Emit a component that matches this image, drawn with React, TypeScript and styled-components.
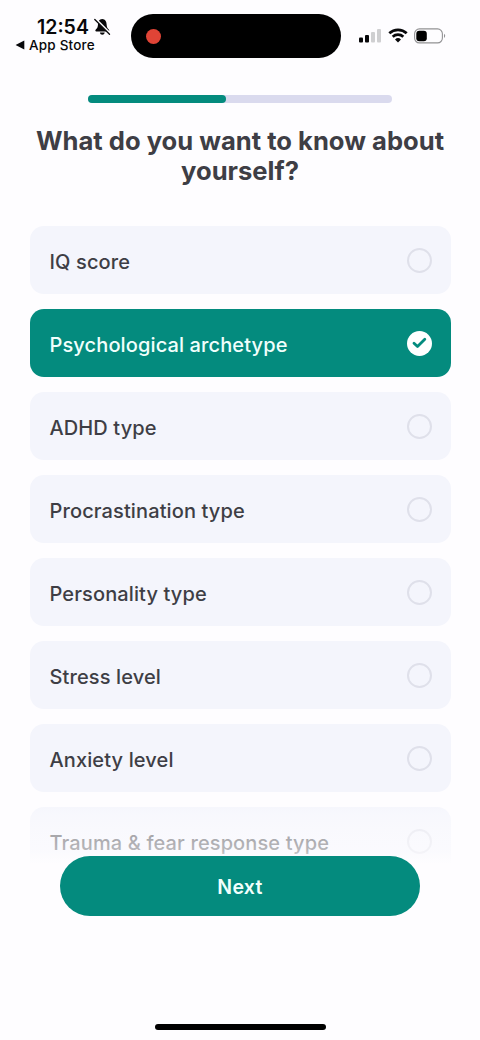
import React from "react";
import styled, { createGlobalStyle } from "styled-components";

const GlobalStyle = createGlobalStyle`
  * { box-sizing: border-box; }
  body { margin: 0; background: #fefdff; }
`;

const Screen = styled.main`
  width: 480px;
  height: 1040px;
  display: flex;
  flex-direction: column;
  align-items: center;
  overflow: hidden;
  background: #fefdff;
  color: #3e3e45;
  font-family: Inter, "Liberation Sans", sans-serif;
`;

const StatusBar = styled.header`
  width: 100%;
  height: 95px;
  flex: none;
  display: grid;
  grid-template-columns: 131px 210px 139px;
  align-items: start;
  padding-top: 14px;
  color: #08080a;
`;

const ClockArea = styled.div`
  display: flex;
  flex-direction: column;
  padding: 2px 0 0 15px;
`;

const ClockRow = styled.div`
  display: flex;
  align-items: center;
  gap: 4px;
  height: 21px;
  padding-left: 22px;
`;

const Clock = styled.span`
  width: 53px;
  padding-top: 2px;
  font-size: 19.5px;
  font-weight: 600;
  line-height: 21px;
  white-space: nowrap;
`;

const BackLink = styled.div`
  display: flex;
  align-items: center;
  gap: 4px;
  height: 16px;
  font-size: 13.5px;
  font-weight: 500;
  line-height: 16px;
  letter-spacing: 0.2px;
  white-space: nowrap;
`;

const Island = styled.div`
  height: 44px;
  display: flex;
  align-items: center;
  padding-left: 15px;
  border-radius: 22px;
  background: #000;
`;

const RecordDot = styled.span`
  width: 15px;
  height: 15px;
  border-radius: 50%;
  background: #e04436;
`;

const Indicators = styled.div`
  display: flex;
  align-items: center;
  gap: 6px;
  height: 43px;
  padding-left: 18px;
`;

const ProgressTrack = styled.div`
  width: 304px;
  height: 8px;
  flex: none;
  border-radius: 4px;
  background: #dadaee;
`;

const ProgressFill = styled.div`
  height: 100%;
  border-radius: 4px;
  background: #048b7e;
`;

const Title = styled.h1`
  width: 430px;
  height: 61px;
  margin: 22px 0 40px;
  padding-top: 0.5px;
  flex: none;
  font-size: 25.6px;
  font-weight: 700;
  line-height: 30.5px;
  text-align: center;
`;

const ListViewport = styled.section`
  position: relative;
  width: 421px;
  height: 638px;
  margin-bottom: -8px;
  flex: none;
  overflow: hidden;
`;

const OptionList = styled.div`
  display: flex;
  flex-direction: column;
  gap: 15px;
`;

const OptionCard = styled.div<{ $selected: boolean }>`
  height: 68px;
  flex: none;
  display: flex;
  align-items: center;
  justify-content: space-between;
  padding: 2px 19px 0 20px;
  border-radius: 14px;
  background: ${(p) => (p.$selected ? "#048b7e" : "#f4f5fc")};
  color: ${(p) => (p.$selected ? "#f1fffc" : "#3e3e45")};
`;

const OptionLabel = styled.span`
  padding-top: 2px;
  font-size: 20px;
  font-weight: 550;
  line-height: 26px;
  letter-spacing: 0.12px;
  white-space: nowrap;
`;

const Radio = styled.span<{ $selected: boolean }>`
  width: 25px;
  height: 25px;
  display: flex;
  align-items: center;
  justify-content: center;
  margin-bottom: 2px;
  border-radius: 50%;
  border: ${(p) => (p.$selected ? "none" : "2px solid #dfe0ea")};
  background: ${(p) => (p.$selected ? "#fff" : "transparent")};
`;

const ListFade = styled.div`
  position: absolute;
  left: 0;
  right: 0;
  bottom: 0;
  height: 64px;
  background: linear-gradient(
    to bottom,
    rgba(254, 253, 255, 0) 0%,
    rgba(254, 253, 255, 0.35) 22%,
    rgba(254, 253, 255, 0.55) 55%,
    rgba(254, 253, 255, 0.64) 80%,
    #fefdff 100%
  );
`;

const NextButton = styled.button`
  position: relative;
  width: 360px;
  height: 60px;
  flex: none;
  padding: 2px 0 0;
  border: 0;
  border-radius: 30px;
  background: #048b7e;
  color: #f1fffc;
  font: 600 19.5px/24px Inter, "Liberation Sans", sans-serif;
  letter-spacing: 0.3px;
`;

const HomeIndicator = styled.div`
  width: 171px;
  height: 6px;
  flex: none;
  margin: auto 0 10px;
  border-radius: 3px;
  background: #000;
`;

const options = [
  "IQ score",
  "Psychological archetype",
  "ADHD type",
  "Procrastination type",
  "Personality type",
  "Stress level",
  "Anxiety level",
  "Trauma & fear response type",
];

const MutedBell = () => (
  <svg width="17" height="18" viewBox="0 0 17 18">
    <path d="M8.2 1C5.2 1.2 4.1 3.5 4 6.3c-.1 2.7-.7 4-2.2 5.3-.8.8-.6 2 .6 2h11.8c1.2 0 1.4-1.2.6-2-1.5-1.3-2.1-2.6-2.2-5.3C12.5 3.5 11.3 1.2 8.2 1Z" fill="#08080a" />
    <path d="M5.9 14.6h4.8c-.3 1.5-1.1 2.2-2.4 2.2s-2.1-.7-2.4-2.2Z" fill="#08080a" />
    <path d="M1.6 1 16.4 15.8" stroke="#fefdff" strokeWidth="2.2" />
    <path d="M.8 1.5 15.5 16.2" stroke="#08080a" strokeWidth="1.3" strokeLinecap="round" />
  </svg>
);

const BackTriangle = () => (
  <svg width="10" height="10" viewBox="0 0 10 10">
    <path d="M.6 5 9.3.6v8.8Z" fill="#08080a" />
  </svg>
);

const Signal = () => (
  <svg width="23" height="15" viewBox="0 0 23 15">
    <rect x="0" y="9.5" width="4" height="5" rx="1" fill="#08080a" />
    <rect x="6" y="7" width="4" height="7.5" rx="1" fill="#08080a" />
    <rect x="12" y="4" width="4" height="10.5" rx="1" fill="#cfcfd1" />
    <rect x="18" y="1" width="4" height="13.5" rx="1" fill="#cfcfd1" />
  </svg>
);

const Wifi = () => (
  <svg width="20" height="15" viewBox="0 0 20 15">
    <g fill="none" stroke="#08080a" strokeWidth="2.7">
      <path d="M1.3 5.3a12.6 12.6 0 0 1 17.4 0" />
      <path d="M4.7 8.8a7.7 7.7 0 0 1 10.6 0" />
    </g>
    <path d="M10 14.5 7 11.500a4.3 4.3 0 0 1 6 0Z" fill="#08080a" />
  </svg>
);

const Battery = () => (
  <svg width="32" height="16" viewBox="0 0 32 16">
    <rect x=".6" y=".9" width="27.8" height="14" rx="4.8" fill="none" stroke="#929294" strokeWidth="1.1" />
    <rect x="2.3" y="2.7" width="10.5" height="10.5" rx="3" fill="#000" />
    <path d="M30 5.8c1.6.8 1.6 3.4 0 4.2Z" fill="#929294" />
  </svg>
);

const Check = () => (
  <svg width="15" height="12" viewBox="0 0 15 12">
    <path d="m2 6.2 3.5 3.3L12.8 2.3" fill="none" stroke="#048b7e" strokeWidth="2.8" strokeLinecap="round" strokeLinejoin="round" />
  </svg>
);

export default function App() {
  const selected = 1;
  const progress = 45.5;
  return (
    <Screen>
      <GlobalStyle />
      <StatusBar>
        <ClockArea>
          <ClockRow>
            <Clock>12:54</Clock>
            <MutedBell />
          </ClockRow>
          <BackLink>
            <BackTriangle />
            App Store
          </BackLink>
        </ClockArea>
        <Island>
          <RecordDot />
        </Island>
        <Indicators>
          <Signal />
          <Wifi />
          <Battery />
        </Indicators>
      </StatusBar>
      <ProgressTrack>
        <ProgressFill style={{ width: `${progress}%` }} />
      </ProgressTrack>
      <Title>
        What do you want to know about
        <br />
        yourself?
      </Title>
      <ListViewport>
        <OptionList>
          {options.map((label, i) => (
            <OptionCard key={label} $selected={i === selected}>
              <OptionLabel>{label}</OptionLabel>
              <Radio $selected={i === selected}>{i === selected && <Check />}</Radio>
            </OptionCard>
          ))}
        </OptionList>
        <ListFade />
      </ListViewport>
      <NextButton>Next</NextButton>
      <HomeIndicator />
    </Screen>
  );
}
